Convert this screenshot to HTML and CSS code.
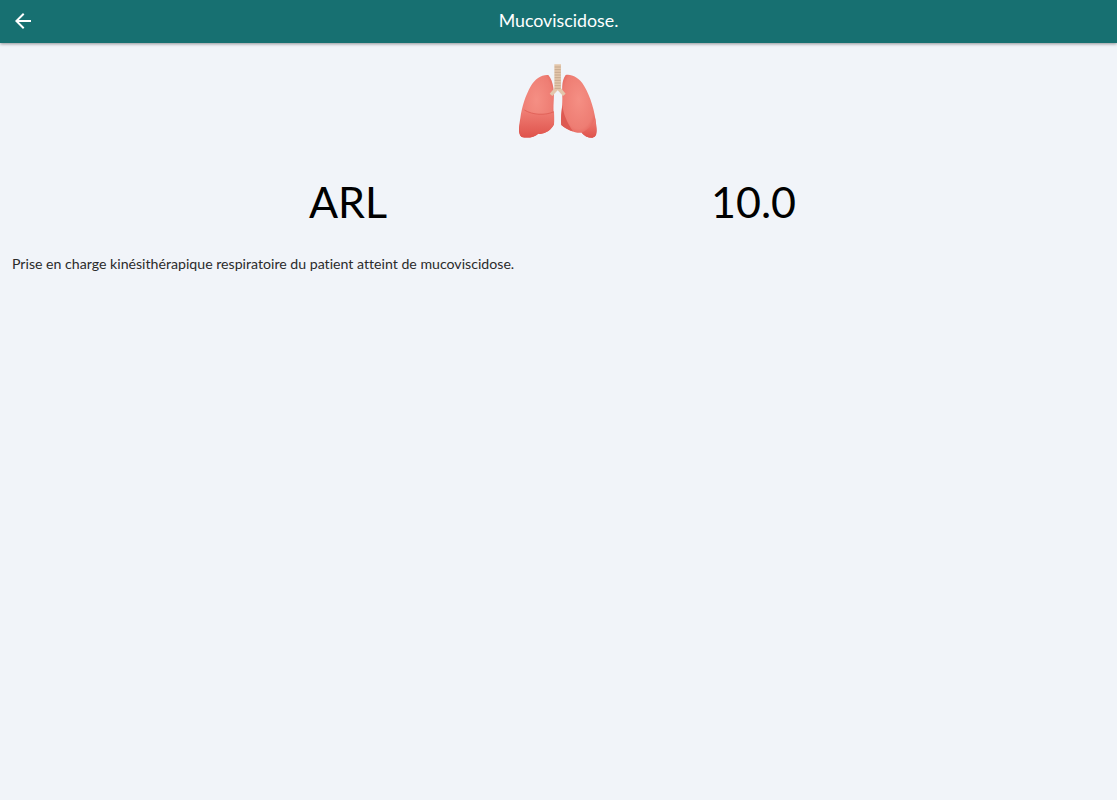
FILE: index.html
```html
<!DOCTYPE html>
<html lang="fr">
<head>
    <meta charset="UTF-8">
    <meta name="viewport" content="width=device-width, initial-scale=1.0">
    <title>Mucoviscidose.</title>
    <link rel="stylesheet" href="styles.css">
</head>
<body>
    <header class="app-bar">
        <button class="back" aria-label="Retour">
            <svg width="24" height="24" viewBox="0 0 24 24"><path d="M20 11H7.83l5.59-5.59L12 4l-8 8 8 8 1.41-1.41L7.83 13H20v-2z" fill="#fff"/></svg>
        </button>
        <h1 class="title">Mucoviscidose.</h1>
    </header>

    <main class="content">
        <div class="emoji">
            <svg width="120" height="95" viewBox="0 0 360 285">
                <defs>
                    <radialGradient id="lobe" cx="0.5" cy="0.4" r="0.7">
                        <stop offset="0" stop-color="#f58f84"/>
                        <stop offset="0.65" stop-color="#ee7d73"/>
                        <stop offset="1" stop-color="#dc4f49"/>
                    </radialGradient>
                    <linearGradient id="lower" x1="0" y1="0" x2="0" y2="1">
                        <stop offset="0" stop-color="#f07f75"/>
                        <stop offset="1" stop-color="#df534c"/>
                    </linearGradient>
                </defs>
                <!-- left lung -->
                <path d="M148 60C128 58 108 72 96 92C80 120 68 155 64 190C60 215 56 238 68 246C85 250 105 248 118 236C135 240 158 225 165 208C166 190 162 170 164 140C166 115 165 80 148 60Z" fill="url(#lobe)"/>
                <path d="M76 165C100 180 140 182 165 170C166 190 166 200 165 208C158 225 135 240 118 236C105 248 85 250 68 246C56 238 60 200 76 165Z" fill="url(#lower)"/>
                <path d="M76 165C100 180 140 182 165 170" fill="none" stroke="#d9544c" stroke-width="2"/>
                <!-- right lung -->
                <path d="M200 60C215 56 240 66 255 92C275 125 288 170 292 212C295 235 292 246 280 248C266 248 255 242 248 233C232 236 205 226 187 210C184 190 190 165 190 130C190 105 186 80 200 60Z" fill="url(#lobe)"/>
                <path d="M190 150C192 175 205 205 222 229C210 226 197 218 187 210C184 190 188 170 190 150Z" fill="#dd5a52"/>
                <path d="M289 190C292 225 296 244 280 248C266 248 255 242 248 233C268 225 282 208 289 190Z" fill="url(#lower)"/>
                <!-- trachea -->
                <path d="M166 28h20v72l14 16-8 7-16-17-16 17-8-7 14-16z" fill="#e3c6ab"/>
                <path d="M167 36h18M167 44h18M167 52h18M167 60h18M167 68h18M167 76h18M167 84h18M167 92h18M167 100h18" stroke="#b99a80" stroke-width="2"/>
            </svg>
        </div>

        <div class="stats">
            <span class="stat">ARL</span>
            <span class="stat">10.0</span>
        </div>

        <p class="description">Prise en charge kinésithérapique respiratoire du patient atteint de mucoviscidose.</p>
    </main>
</body>
</html>
```

FILE: styles.css
```css
body { margin: 0; background: #f1f4f9; font-family: Lato, "Open Sans", sans-serif; font-variant-ligatures: none; color: #000; }

.app-bar { display: flex; align-items: center; justify-content: center; position: relative; height: 43px; background: #177071; box-shadow: 0 1px 3px rgba(0, 0, 0, 0.4); }
.back { position: absolute; left: 11px; top: 9px; padding: 0; border: 0; background: none; line-height: 0; }
.title { margin: 0 0 3px; font-size: 17.8px; font-weight: 400; color: #fff; }

.emoji { display: flex; justify-content: center; padding-top: 12px; }
.stats { display: flex; justify-content: center; gap: 324px; padding: 24px 12px 0 0; }
.stat { font-size: 43px; line-height: 56px; }
.description { margin: 24px 0 0 12px; font-size: 14.15px; line-height: 20px; color: #2b2b2b; }
```
